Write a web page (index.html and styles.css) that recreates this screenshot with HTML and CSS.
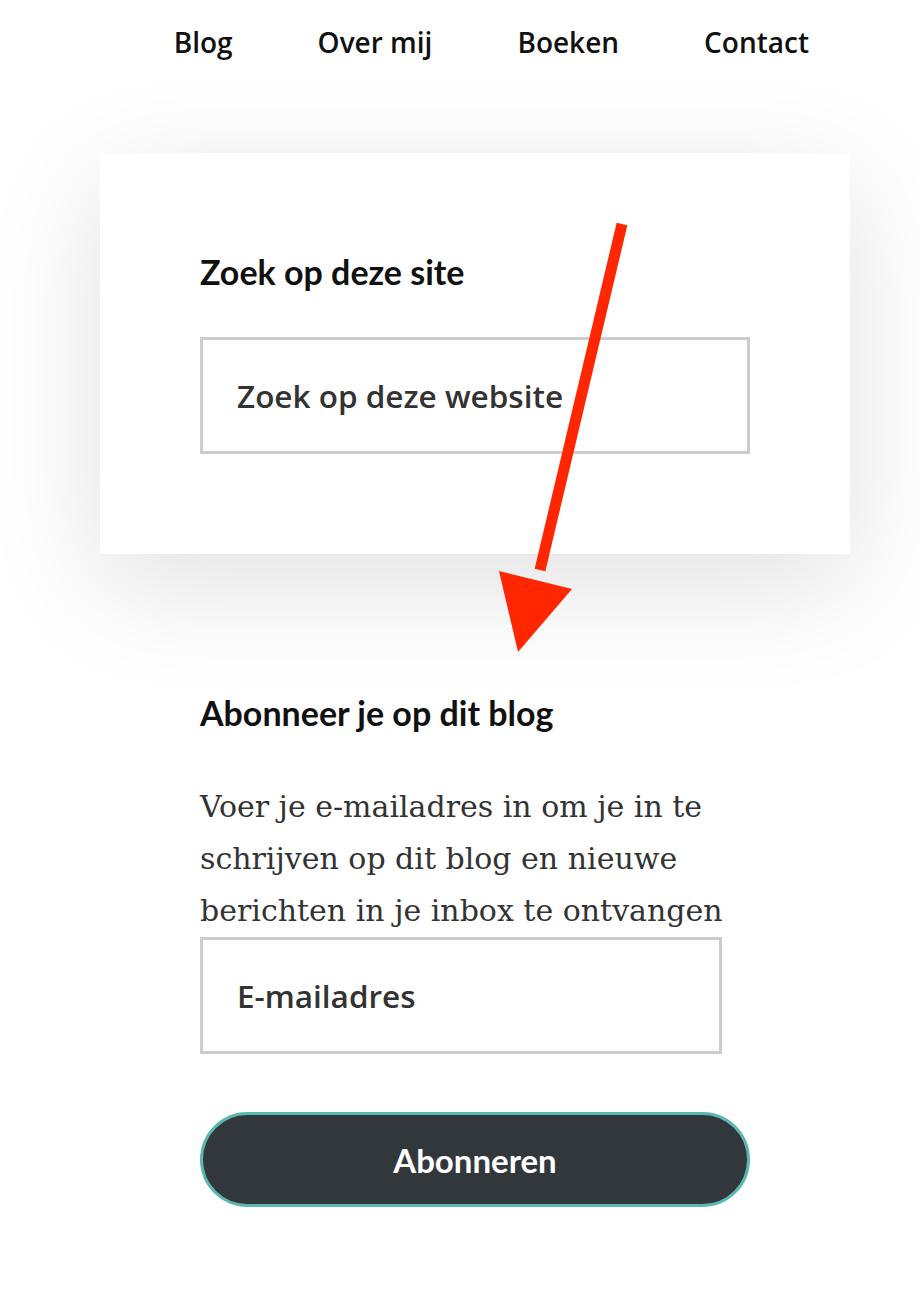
FILE: index.html
```html
<!DOCTYPE html>
<html lang="nl">

<head>
    <meta charset="UTF-8">
    <meta name="viewport" content="width=device-width, initial-scale=1.0">
    <title>Zoek op deze site</title>
    <link rel="stylesheet" href="styles.css">
</head>

<body>
    <ul id="menu">
        <li><a href="#">Blog</a></li>
        <li><a href="#">Over mij</a></li>
        <li><a href="#">Boeken</a></li>
        <li><a href="#">Contact</a></li>
    </ul>

    <div class="zoek-kaart">
        <h2 class="widget-titel">Zoek op deze site</h2>
        <input type="text" class="veld veld-zoek" placeholder="Zoek op deze website">
    </div>

    <div class="abonneer">
        <h2 class="widget-titel">Abonneer je op dit blog</h2>
        <p class="intro">Voer je e-mailadres in om je in te schrijven op dit blog en nieuwe berichten in je inbox te ontvangen</p>
        <input type="email" class="veld veld-mail" placeholder="E-mailadres">
        <button type="button" class="knop">Abonneren</button>
    </div>

    <!-- rode pijl (annotatie) -->
    <svg class="pijl" width="920" height="1300" viewBox="0 0 920 1300">
        <line x1="622" y1="224" x2="540" y2="570" stroke="#ff2600" stroke-width="11" />
        <polygon points="499,571 572,589 518,652" fill="#ff2600" />
    </svg>
</body>

</html>
```

FILE: styles.css
```css
/* Algemene stijlen */
body {
    font-family: Lato, "Liberation Sans", sans-serif;
    margin: 0;
    padding: 0;
    background-color: #fff;
    color: #111;
    position: relative;
    min-height: 1300px;
}

#menu {
    list-style-type: none;
    margin: 0;
    padding: 22px 111px 0 0;
    height: 131px;
    box-sizing: border-box;
    display: flex;
    justify-content: flex-end;
    gap: 85px;
}

#menu li a {
    text-decoration: none;
    color: #111;
    font-family: "Open Sans", Lato, sans-serif;
    font-size: 28px;
    font-weight: 600;
    line-height: 40px;
}

.zoek-kaart {
    width: 750px;
    margin-left: 100px;
    margin-top: 22px;
    padding: 98px 100px 100px;
    box-sizing: border-box;
    background-color: #fff;
    box-shadow: 0 30px 110px rgba(0, 0, 0, 0.12);
}

.widget-titel {
    font-size: 34px;
    font-weight: 700;
    line-height: 42px;
    margin: 0 0 44px;
    color: #111;
}

.veld {
    display: block;
    height: 117px;
    padding: 0 34px;
    border: 3px solid #ccc;
    box-sizing: border-box;
    font-family: "Open Sans", Lato, sans-serif;
    font-size: 31.5px;
    font-weight: 600;
    color: #333;
    background: #fff;
    outline: none;
}

.veld::placeholder {
    color: #333;
    opacity: 1;
}

.veld-zoek {
    width: 550px;
}

.abonneer {
    width: 550px;
    margin-left: 200px;
    padding-top: 138px;
}

.abonneer .widget-titel {
    margin-bottom: 47px;
}

.intro {
    font-family: "DejaVu Serif", "Liberation Serif", serif;
    font-size: 30px;
    line-height: 52px;
    color: #333;
    margin: 0;
}

.veld-mail {
    width: 522px;
    margin-top: 0;
}

.knop {
    display: block;
    width: 550px;
    height: 95px;
    margin-top: 58px;
    background-color: #32373c;
    border: 3px solid #5ab8b0;
    border-radius: 50px;
    color: #fff;
    font-family: inherit;
    font-size: 33px;
    font-weight: 700;
    cursor: pointer;
}

.pijl {
    position: absolute;
    top: 0;
    left: 0;
    pointer-events: none;
}
```
